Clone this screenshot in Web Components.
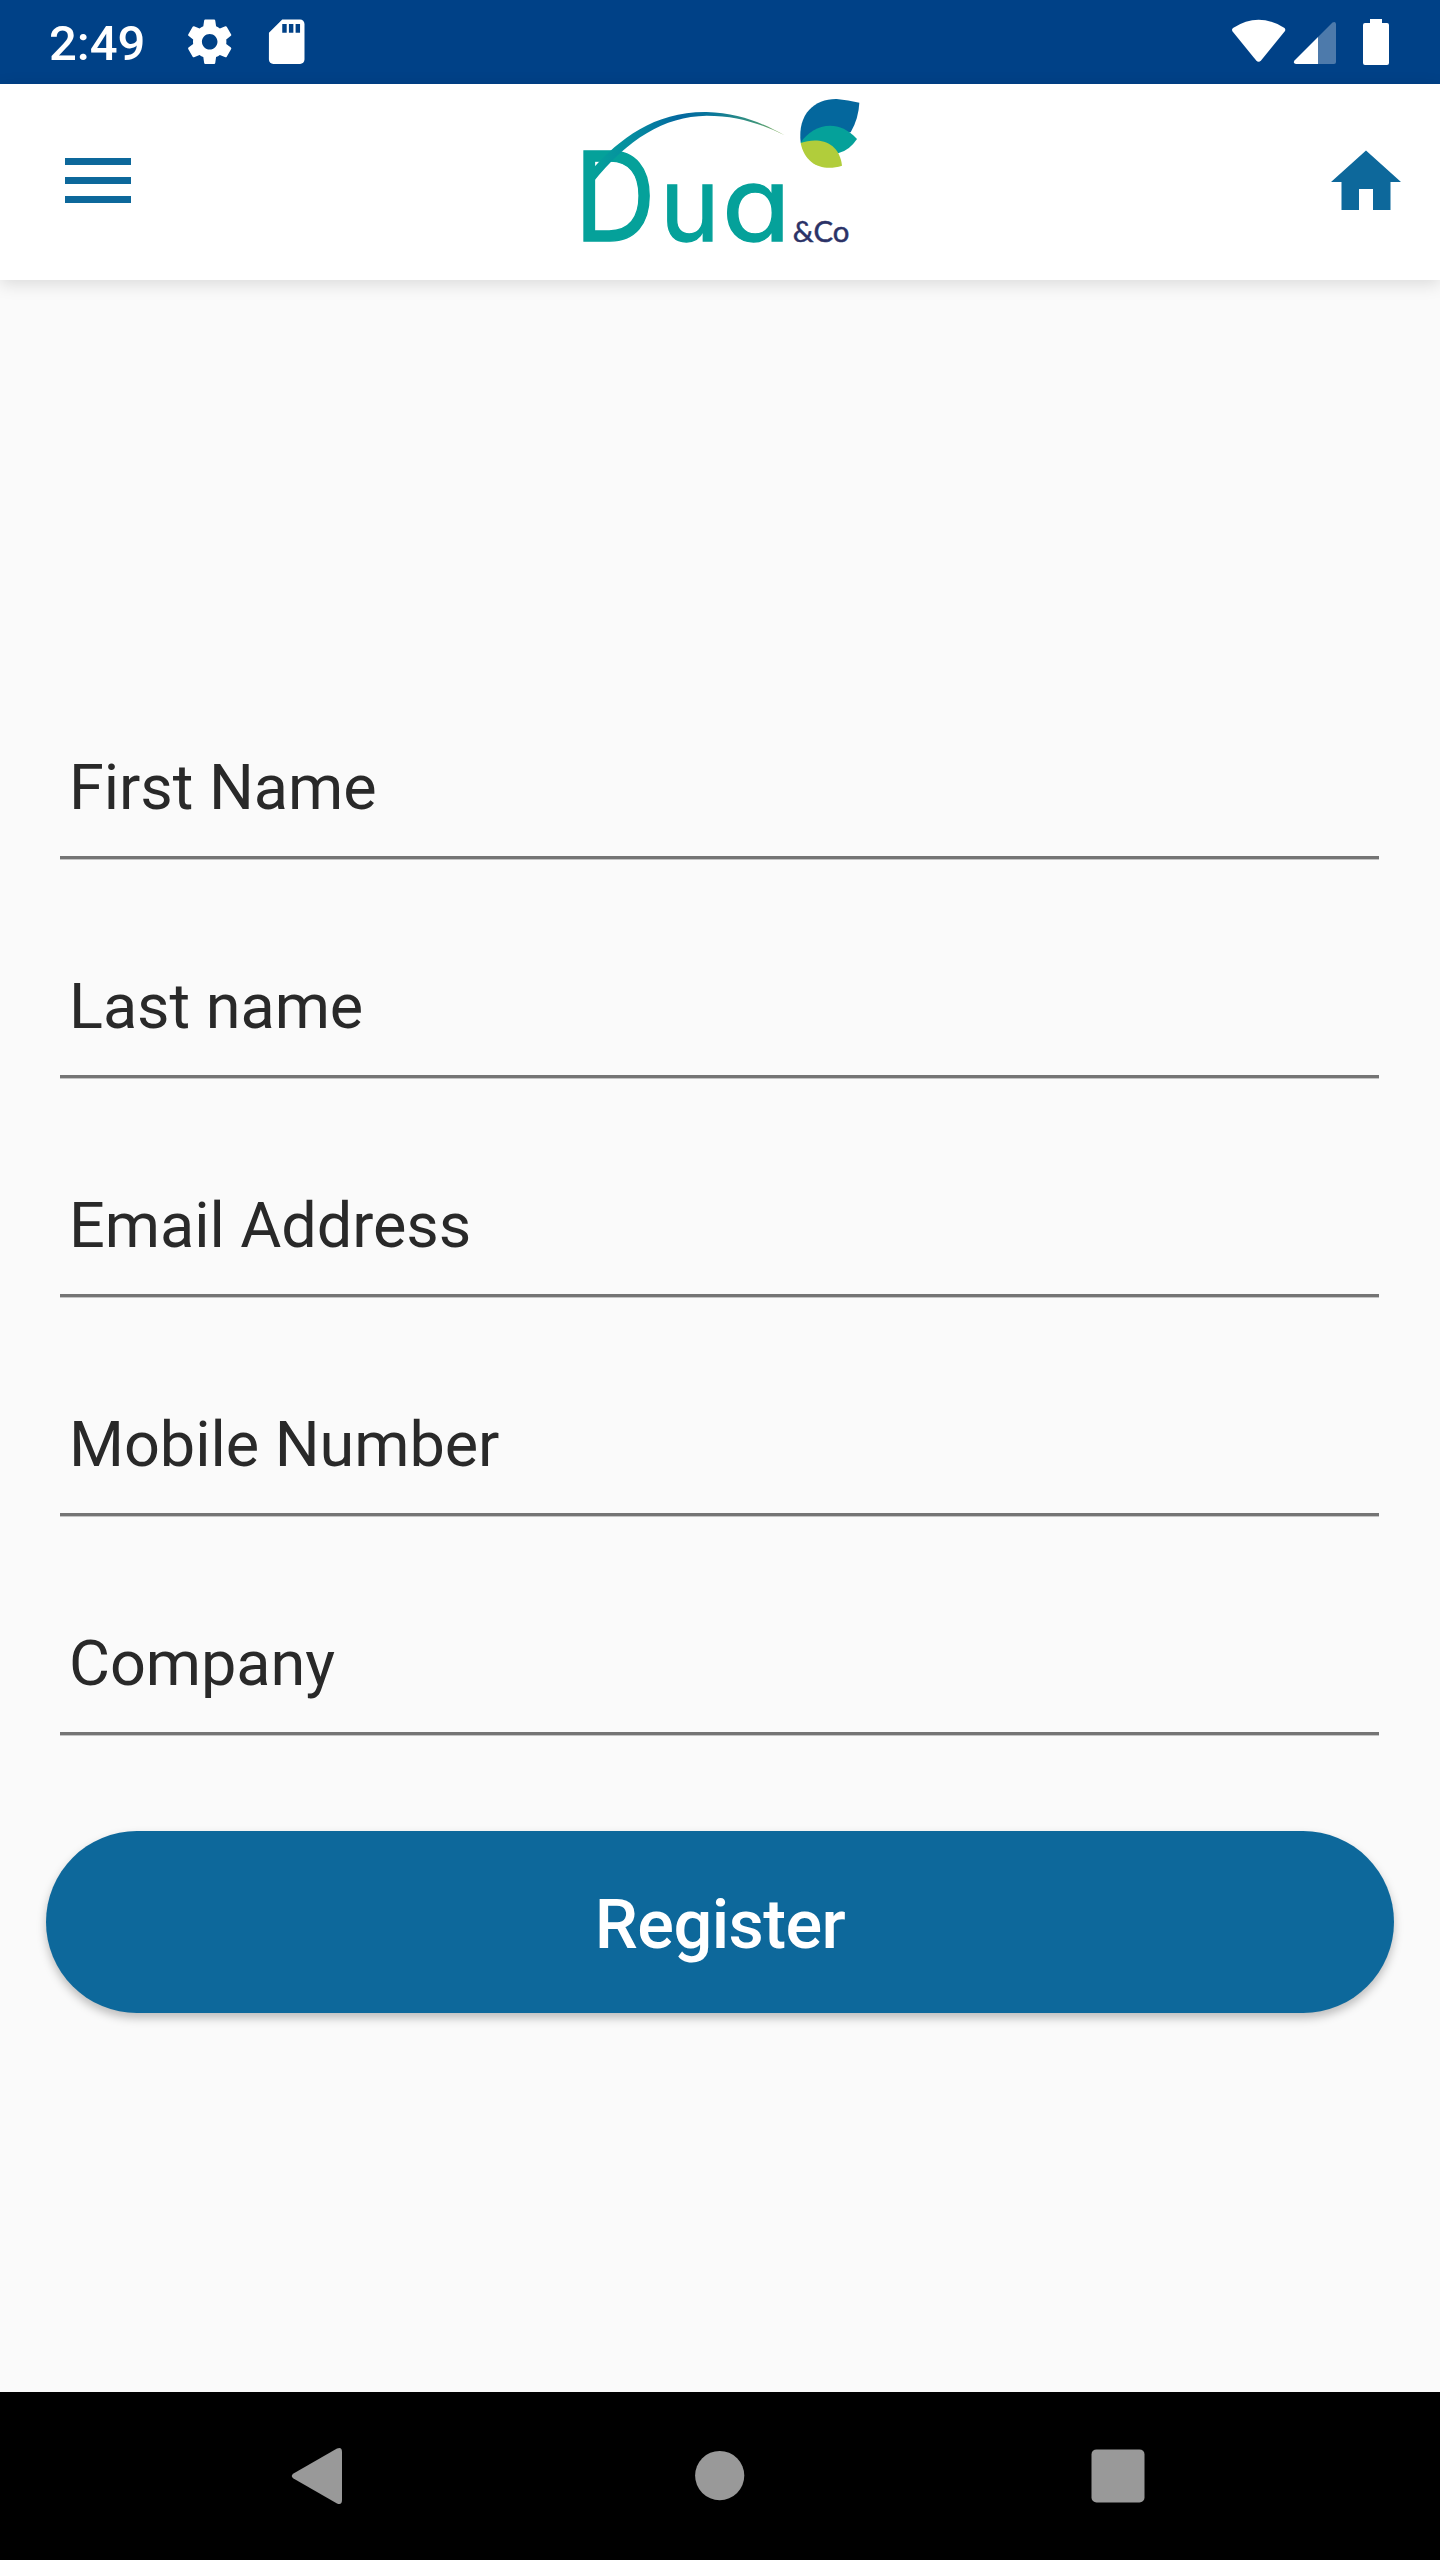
<!DOCTYPE html>
<html lang="en">
<head>
<meta charset="utf-8">
<title>Register</title>
<style>
  body {
    margin: 0;
    font-family: Roboto, sans-serif;
  }
</style>
</head>
<body>
<register-screen></register-screen>

<script>
const COLORS = {
  status: "#004187",
  primary: "#0d689b",
  background: "#fafafa",
  text: "#292929",
  line: "#747474",
  nav: "#999999",
};

const FIELDS = ["First Name", "Last name", "Email Address", "Mobile Number", "Company"];

class StatusBar extends HTMLElement {
  constructor() {
    super();
    this.attachShadow({ mode: "open" });
  }

  connectedCallback() {
    this.shadowRoot.innerHTML = `
      <style>
        :host {
          display: flex;
          justify-content: space-between;
          height: 84px;
          box-sizing: border-box;
          padding: 0 42px 0 49px;
          background: ${COLORS.status};
          color: #ffffff;
        }

        .left {
          display: flex;
          align-items: center;
        }

        .time {
          width: 134px;
          font-size: 49px;
          font-weight: 500;
          line-height: 84px;
          padding-top: 3px;
        }

        .left svg {
          width: 53.4px;
          height: 53.4px;
          margin-right: 23.6px;
        }

        svg {
          display: block;
          fill: currentColor;
        }
      </style>
      <div class="left">
        <span class="time">2:49</span>
        <svg viewBox="0 0 24 24"><path d="M19.43 12.98c.04-.32.07-.64.07-.98s-.03-.66-.07-.98l2.11-1.65c.19-.15.24-.42.12-.64l-2-3.46c-.12-.22-.39-.3-.61-.22l-2.49 1c-.52-.4-1.08-.73-1.69-.98l-.38-2.65C14.46 2.18 14.25 2 14 2h-4c-.25 0-.46.18-.49.42l-.38 2.65c-.61.25-1.17.59-1.69.98l-2.49-1c-.23-.09-.49 0-.61.22l-2 3.46c-.13.22-.07.49.12.64l2.11 1.65c-.04.32-.07.65-.07.98s.03.66.07.98l-2.11 1.65c-.19.15-.24.42-.12.64l2 3.46c.12.22.39.3.61.22l2.49-1c.52.4 1.08.73 1.69.98l.38 2.65c.03.24.24.42.49.42h4c.25 0 .46-.18.49-.42l.38-2.65c.61-.25 1.17-.59 1.69-.98l2.49 1c.23.09.49 0 .61-.22l2-3.46c.12-.22.07-.49-.12-.64l-2.11-1.65zM12 15.500c-1.930 0-3.500-1.570-3.500-3.500s1.570-3.500 3.500-3.500 3.500 1.570 3.500 3.500-1.570 3.500-3.500 3.500z"/></svg>
        <svg viewBox="0 0 24 24"><path d="M18 2h-8L4.02 8 4 20c0 1.100.9 2 2 2h12c1.100 0 2-.9 2-2V4c0-1.100-.9-2-2-2zm-6 6h-2V4h2v4zm3 0h-2V4h2v4zm3 0h-2V4h2v4z"/></svg>
      </div>
      <svg width="168" height="84" viewBox="1230 0 168 84">
        <path d="M1233 28Q1258.500 11.500 1284.500 28Q1286 29.500 1284.600 31.500L1261 60.500Q1258.600 63 1256.200 60.500L1232.600 31.500Q1231.200 29.500 1233 28Z"/>
        <path d="M1318 37V64H1296Q1292.500 63 1294.500 60.500Z"/>
        <path opacity=".3" d="M1318 37L1332.500 22.600Q1335.500 21 1336 24V62Q1336 64 1334 64H1318Z"/>
        <path d="M1370 19h12v4h5q2 0 2 2v38q0 2-2 2h-22q-2 0-2-2V25q0-2 2-2h5z"/>
      </svg>
    `;
  }
}

class BrandLogo extends HTMLElement {
  constructor() {
    super();
    this.attachShadow({ mode: "open" });
  }

  connectedCallback() {
    this.shadowRoot.innerHTML = `
      <style>
        :host {
          display: block;
        }

        svg {
          display: block;
        }

        .name {
          font-family: Inter, sans-serif;
          font-feature-settings: "cv11";
          fill: #05a19a;
          stroke: #05a19a;
          stroke-width: 4;
        }

        .suffix {
          font-family: Lato, sans-serif;
          font-size: 88px;
          fill: #2b3267;
          stroke: #2b3267;
          stroke-width: 1.5;
        }
      </style>
      <svg width="320" height="196" viewBox="0 12 960 588">
        <defs>
          <linearGradient id="arc" gradientUnits="userSpaceOnUse" x1="100" y1="0" x2="674" y2="0">
            <stop offset="0" stop-color="#05a19a"/>
            <stop offset=".2" stop-color="#058da0"/>
            <stop offset=".45" stop-color="#0468a0"/>
            <stop offset=".62" stop-color="#08779b"/>
            <stop offset=".85" stop-color="#3c947b"/>
            <stop offset="1" stop-color="#9bbc68"/>
          </linearGradient>
        </defs>
        <text class="name" y="483"><tspan x="42" font-size="370" textLength="246" lengthAdjust="spacingAndGlyphs">D</tspan><tspan x="300" font-size="307" textLength="179" lengthAdjust="spacingAndGlyphs">u</tspan><tspan x="486" font-size="307" textLength="206" lengthAdjust="spacingAndGlyphs">a</tspan></text>
        <text class="suffix" x="698" y="485">&amp;Co</text>
        <path fill="url(#arc)" d="M98 266C180 176 285 94 440 96C535 98 610 130 674 166C600 130 530 107 440 107C310 110 205 176 98 308Z"/>
        <path fill="#04679d" d="M722 188C712 100 765 56 830 57Q865 60 898 68Q896 115 872 157Z"/>
        <path fill="#05a19a" d="M722 188C755 138 830 110 891 177Q868 212 834 220Z"/>
        <path fill="#b1cd3b" d="M722 189C770 172 837 180 846 257C790 275 735 255 722 189Z"/>
      </svg>
    `;
  }
}

class AppHeader extends HTMLElement {
  constructor() {
    super();
    this.attachShadow({ mode: "open" });
  }

  connectedCallback() {
    this.shadowRoot.innerHTML = `
      <style>
        :host {
          display: grid;
          grid-template-columns: 1fr auto 1fr;
          align-items: center;
          height: 196px;
          box-sizing: border-box;
          padding: 0 32px;
          background: #ffffff;
          box-shadow: 0 4px 16px rgba(0, 0, 0, 0.13);
        }

        .menu {
          display: flex;
          flex-direction: column;
          gap: 12px;
          width: 66px;
          margin: -3px 0 0 33px;
        }

        .menu i {
          height: 7px;
          background: ${COLORS.primary};
        }

        .home {
          display: block;
          justify-self: end;
          fill: ${COLORS.primary};
        }
      </style>
      <div class="menu"><i></i><i></i><i></i></div>
      <slot></slot>
      <svg class="home" width="84" height="84" viewBox="0 0 24 24"><path d="M10 20v-6h4v6h5v-8h3L12 3 2 12h3v8z"/></svg>
    `;
  }
}

class FormField extends HTMLElement {
  constructor() {
    super();
    this.attachShadow({ mode: "open" });
  }

  connectedCallback() {
    this.shadowRoot.innerHTML = `
      <style>
        :host {
          display: flex;
          align-items: flex-end;
          height: 219px;
          box-sizing: border-box;
          padding: 0 9px 31px;
          border-bottom: 3px solid ${COLORS.line};
          box-shadow: 0 1px rgba(116, 116, 116, 0.4);
          color: ${COLORS.text};
          font-size: 63px;
          line-height: 74px;
          letter-spacing: -0.05px;
        }
      </style>
      <span>${this.getAttribute("label")}</span>
    `;
  }
}

class PrimaryButton extends HTMLElement {
  constructor() {
    super();
    this.attachShadow({ mode: "open" });
  }

  connectedCallback() {
    this.shadowRoot.innerHTML = `
      <style>
        :host {
          display: block;
        }

        button {
          display: block;
          width: 100%;
          height: 182px;
          padding: 4px 0 0;
          border: none;
          border-radius: 91px;
          background: ${COLORS.primary};
          color: #ffffff;
          font: 500 68.5px Roboto, sans-serif;
          letter-spacing: -0.6px;
          box-shadow: 0 5px 10px rgba(0, 0, 0, 0.25);
        }
      </style>
      <button><slot></slot></button>
    `;
  }
}

class NavBar extends HTMLElement {
  constructor() {
    super();
    this.attachShadow({ mode: "open" });
  }

  connectedCallback() {
    this.shadowRoot.innerHTML = `
      <style>
        :host {
          display: flex;
          justify-content: center;
          align-items: center;
          gap: 314px;
          height: 168px;
          background: #000000;
        }

        svg {
          width: 84px;
          height: 84px;
          fill: ${COLORS.nav};
        }
      </style>
      <svg viewBox="0 0 84 84"><path d="M13.500 39.500L57 14.500Q62 12.500 62 18V66Q62 71.500 57 69.500L13.500 44.500Q10 42 13.500 39.500Z"/></svg>
      <svg viewBox="0 0 84 84"><circle cx="41.700" cy="41.600" r="24.600"/></svg>
      <svg viewBox="0 0 84 84"><rect x="15.500" y="15.400" width="53" height="53" rx="5"/></svg>
    `;
  }
}

class RegisterScreen extends HTMLElement {
  constructor() {
    super();
    this.attachShadow({ mode: "open" });
  }

  connectedCallback() {
    this.shadowRoot.innerHTML = `
      <style>
        :host {
          display: flex;
          flex-direction: column;
          width: 1440px;
          height: 2560px;
          background: ${COLORS.background};
        }

        main {
          flex: 1;
          padding: 360px 46px 0;
        }

        .fields {
          padding: 0 15px 0 14px;
        }

        primary-button {
          margin-top: 96px;
        }
      </style>
      <status-bar></status-bar>
      <app-header><brand-logo></brand-logo></app-header>
      <main>
        <div class="fields">
          ${FIELDS.map((label) => `<form-field label="${label}"></form-field>`).join("")}
        </div>
        <primary-button>Register</primary-button>
      </main>
      <nav-bar></nav-bar>
    `;
  }
}

customElements.define("status-bar", StatusBar);
customElements.define("brand-logo", BrandLogo);
customElements.define("app-header", AppHeader);
customElements.define("form-field", FormField);
customElements.define("primary-button", PrimaryButton);
customElements.define("nav-bar", NavBar);
customElements.define("register-screen", RegisterScreen);
</script>
</body>
</html>
